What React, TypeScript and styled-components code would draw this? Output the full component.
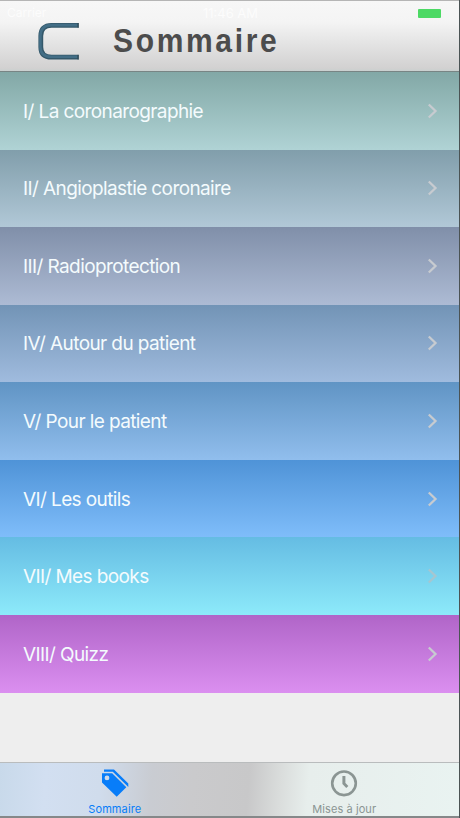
import React from "react";
import styled, { createGlobalStyle } from "styled-components";

const Global = createGlobalStyle`
  * { box-sizing: border-box; }
  body { margin: 0; background: #eee; }
`;

const Screen = styled.div`
  width: 460px;
  height: 818px;
  display: flex;
  flex-direction: column;
  overflow: hidden;
  background: #eeeeee;
  border-right: 1px solid #4b5354;
  font-family: Inter, "Liberation Sans", sans-serif;
`;

const Header = styled.header`
  height: 72px;
  flex: none;
  display: flex;
  flex-direction: column;
  border-top: 1px solid #b5b5b5;
  border-bottom: 1px solid #788584;
  background: linear-gradient(#f7f7f7 0%, #f4f4f4 30%, #e5e5e5 58%, #d2d1d1 96%, #c9d0cf 100%);
`;

const StatusBar = styled.div`
  height: 21px;
  flex: none;
  display: grid;
  grid-template-columns: 1fr auto 1fr;
  align-items: center;
  padding: 3px 18px 0 7px;
  color: #fcfcfc;
  font-size: 12px;
  line-height: 14px;
`;

const Clock = styled.span`
  padding-left: 13px;
  font-size: 13px;
`;

const Battery = styled.span`
  justify-self: end;
  width: 23px;
  height: 9px;
  border-radius: 1px;
  background: #4cd964;
`;

const Brand = styled.div`
  display: flex;
  align-items: flex-start;
  padding-left: 37px;
`;

const Logo = styled.svg`
  width: 43px;
  height: 40px;
  flex: none;
`;

const Title = styled.h1`
  margin: 0 0 0 33px;
  font: bold 34px/36px "Liberation Sans", Arial, sans-serif;
  letter-spacing: 3px;
  color: #4c4c4c;
  transform: scaleX(0.883);
  transform-origin: 0 50%;
`;

const List = styled.ul`
  list-style: none;
  margin: 0;
  padding: 0;
  height: 620.5px;
  flex: none;
  display: grid;
  grid-template-rows: repeat(8, 1fr);
`;

const Row = styled.li<{ $from: string; $to: string }>`
  display: flex;
  align-items: center;
  justify-content: space-between;
  padding: 0 20px 0 23px;
  background: linear-gradient(${(p) => p.$from}, ${(p) => p.$to});
`;

const Label = styled.span`
  padding-top: 2px;
  font-size: 19px;
  font-weight: 400;
  line-height: 24px;
  letter-spacing: -0.6px;
  color: #f4fbfd;
  white-space: nowrap;
`;

const Chevron = styled.svg<{ $color: string }>`
  width: 12px;
  height: 18px;
  fill: none;
  stroke: ${(p) => p.$color};
  stroke-width: 2.3;
`;

const TabBar = styled.nav`
  margin-top: auto;
  height: 56px;
  flex: none;
  display: grid;
  grid-template-columns: 1fr 1fr;
  border-top: 1px solid #b9bcbd;
  border-bottom: 2px solid #858889;
  background: linear-gradient(94deg, #c8d9ea 0%, #d2dff1 10%, #d0dcec 22%, #c9ccd2 33%, #cacacc 42%, #c8c8c9 54%, #dadddc 61%, #e7eeec 67%, #e9f3f1 100%);
`;

const Tab = styled.div<{ $active?: boolean }>`
  display: flex;
  flex-direction: column;
  align-items: center;
  padding-top: 6px;
  color: ${(p) => (p.$active ? "#087df9" : "#8b9593")};
  font-size: 11px;
  line-height: 14px;
  letter-spacing: ${(p) => (p.$active ? "0.1px" : "0.08px")};
`;

const TabIcon = styled.svg`
  width: 28px;
  height: 28px;
  flex: none;
  margin-bottom: 5px;
`;

const rows = [
  { text: "I/ La coronarographie", from: "#82a8a6", to: "#b0d3d5" },
  { text: "II/ Angioplastie coronaire", from: "#819eab", to: "#b1c8d7" },
  { text: "III/ Radioprotection", from: "#808fa9", to: "#adbbd4" },
  { text: "IV/ Autour du patient", from: "#7294b6", to: "#a0bbde" },
  { text: "V/ Pour le patient", from: "#6094c4", to: "#91beed" },
  { text: "VI/ Les outils", from: "#4f93d7", to: "#7fbdfa" },
  { text: "VII/ Mes books", from: "#65bce3", to: "#8deafa", arrow: "#a6c6d0" },
  { text: "VIII/ Quizz", from: "#b065c8", to: "#db8ff0" },
];

export default function App() {
  return (
    <>
      <Global />
      <Screen>
        <Header>
          <StatusBar>
            <span>Carrier</span>
            <Clock>11:46 AM</Clock>
            <Battery />
          </StatusBar>
          <Brand>
            <Logo viewBox="0 0 43 40" fill="none">
              <path d="M41.5 3.4H14.5Q3.8 3.4 3.8 14V25Q3.8 35.2 14.5 35.2H41.5" stroke="#34586a" strokeWidth="4.8" />
              <path d="M40.5 3.1H14.5Q3.4 3.1 3.4 14V25Q3.4 34.8 14.5 34.8H40.5" stroke="#436e86" strokeWidth="2.6" />
              <path d="M41.2 1V5.8M41.2 32.8V37.6" stroke="#29434f" strokeWidth="1" />
            </Logo>
            <Title>Sommaire</Title>
          </Brand>
        </Header>
        <List>
          {rows.map((r) => (
            <Row key={r.text} $from={r.from} $to={r.to}>
              <Label>{r.text}</Label>
              <Chevron viewBox="0 0 12 18" $color={r.arrow ?? "#c7cbd0"}>
                <path d="M1.8 2.5L8.5 9L1.8 15.5" />
              </Chevron>
            </Row>
          ))}
        </List>
        <TabBar>
          <Tab $active>
            <TabIcon viewBox="0 0 28 28" fill="currentColor">
              <path d="M3 0.5H13L27.3 14.4V18L11.8 2.7H3Z" />
              <path fillRule="evenodd" d="M1 4.2H11.2L25.3 18.2L15.7 27.8L1 13.5ZM6 6.5A2.4 2.4 0 1 0 6 11.3A2.4 2.4 0 1 0 6 6.5Z" />
            </TabIcon>
            Sommaire
          </Tab>
          <Tab>
            <TabIcon viewBox="0 0 28 28" fill="none" stroke="currentColor">
              <circle cx="14" cy="14.3" r="11.8" strokeWidth="2.6" />
              <path d="M13.9 7V14.5L17.3 18" strokeWidth="3" />
            </TabIcon>
            Mises à jour
          </Tab>
        </TabBar>
      </Screen>
    </>
  );
}
